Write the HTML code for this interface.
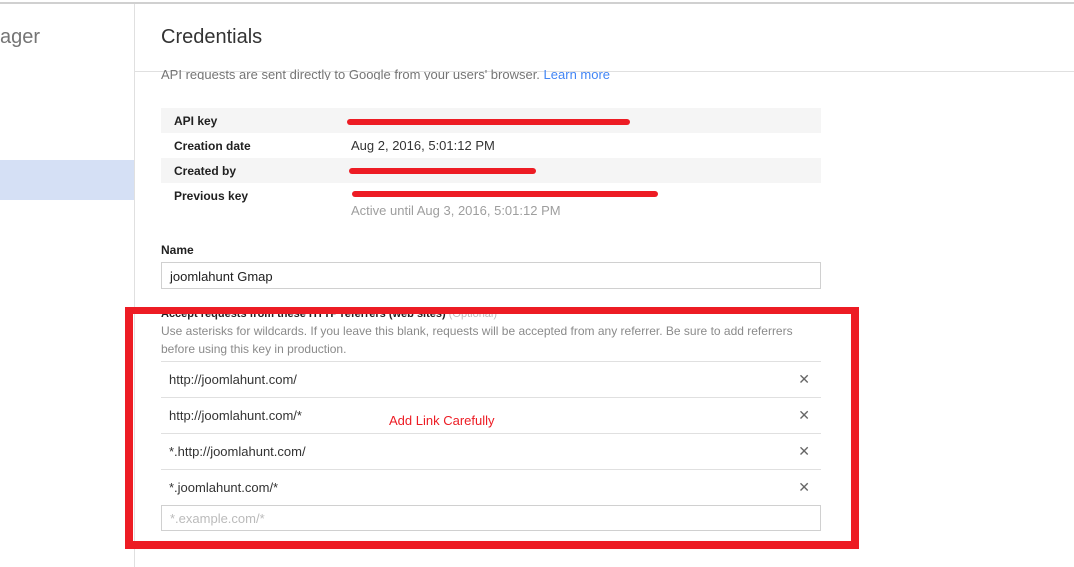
<!DOCTYPE html>
<html><head><style>
*{margin:0;padding:0;box-sizing:border-box}
body{width:1074px;height:567px;overflow:hidden;background:#fff;font-family:"Liberation Sans",Arial,sans-serif;position:relative;color:#212121}
.a{position:absolute}
.lbl{font-size:12px;font-weight:bold;color:#212121}
.val{font-size:13px;color:#333}
.row{position:absolute;left:161px;width:660px;height:25px}
.red{position:absolute;height:6px;background:#ed1c24;border-radius:3px}
.ref{position:absolute;left:161px;width:660px;height:36px;border-top:1px solid #e0e0e0;font-size:13px;color:#333;padding:10px 0 0 8px}
.x{position:absolute;right:11px;top:9px;font-size:14px;color:#666}
</style></head><body>
<div class="a" style="left:0;top:2px;width:1074px;height:2px;background:#d0d0d0"></div>
<div class="a" style="left:134px;top:4px;width:1px;height:563px;background:#e0e0e0"></div>
<div class="a" style="left:0;top:26px;font-size:20px;color:#757575">ager</div>
<div class="a" style="left:0;top:160px;width:134px;height:40px;background:#d5e0f5"></div>
<div class="a" style="left:161px;top:26px;font-size:20px;color:#333">Credentials</div>
<div class="a" style="left:135px;top:71px;width:939px;height:1px;background:#e0e0e0"></div>
<div class="a" style="left:161px;top:66px;font-size:13px;color:#757575;height:14px;overflow:hidden;line-height:17px">API requests are sent directly to Google from your users' browser. <span style="color:#4285f4">Learn more</span></div>

<div class="row" style="top:108px;background:#f5f5f5"></div>
<div class="row" style="top:158px;background:#f5f5f5"></div>
<div class="a lbl" style="left:174px;top:114px">API key</div>
<div class="a lbl" style="left:174px;top:139px">Creation date</div>
<div class="a lbl" style="left:174px;top:164px">Created by</div>
<div class="a lbl" style="left:174px;top:189px">Previous key</div>
<div class="red" style="left:347px;top:119px;width:283px"></div>
<div class="a val" style="left:351px;top:138px">Aug 2, 2016, 5:01:12 PM</div>
<div class="red" style="left:349px;top:168px;width:187px"></div>
<div class="red" style="left:352px;top:191px;width:306px"></div>
<div class="a val" style="left:351px;top:203px;color:#9e9e9e">Active until Aug 3, 2016, 5:01:12 PM</div>

<div class="a lbl" style="left:161px;top:243px">Name</div>
<div class="a" style="left:161px;top:262px;width:660px;height:27px;border:1px solid #d0d0d0;font-size:13px;padding:6px 8px">joomlahunt Gmap</div>

<div class="a lbl" style="left:161px;top:308px;font-size:11px;white-space:nowrap">Accept requests from these HTTP referrers (web sites) <span style="font-weight:normal;color:#bbb">(Optional)</span></div>
<div class="a" style="left:161px;top:322px;font-size:12px;color:#8a8a8a;line-height:18px;width:660px">Use asterisks for wildcards. If you leave this blank, requests will be accepted from any referrer. Be sure to add referrers before using this key in production.</div>
<div class="ref" style="top:361px">http://joomlahunt.com/<span class="x">✕</span></div>
<div class="ref" style="top:397px">http://joomlahunt.com/*<span class="x">✕</span></div>
<div class="ref" style="top:433px">*.http://joomlahunt.com/<span class="x">✕</span></div>
<div class="ref" style="top:469px">*.joomlahunt.com/*<span class="x">✕</span></div>
<div class="a" style="left:161px;top:505px;width:660px;height:26px;border:1px solid #d0d0d0;font-size:13px;color:#bbb;padding:5px 8px">*.example.com/*</div>
<div class="a" style="left:389px;top:413px;font-size:13px;color:#ed1c24">Add Link Carefully</div>
<div class="a" style="left:125px;top:307px;width:734px;height:242px;border:8px solid #ed1c24;border-top-width:7px"></div>
</body></html>
